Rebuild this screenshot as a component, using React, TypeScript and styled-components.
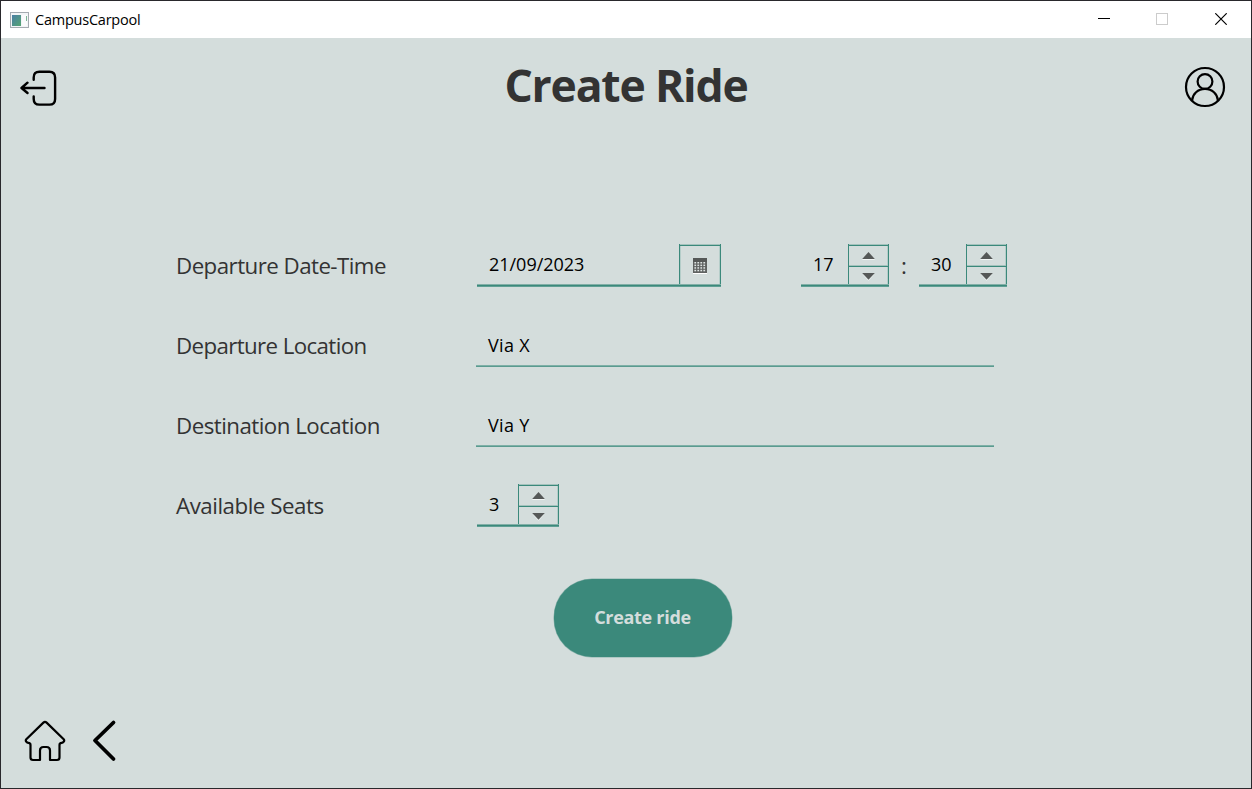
import React from 'react';
import styled, { createGlobalStyle } from 'styled-components';

const ACCENT = '#3b897b';
const SURFACE = '#d4dddc';
const ACCENT_SOFT = '#a3c2bc';

const GlobalStyle = createGlobalStyle`
  * { box-sizing: border-box; }
  body { margin: 0; background: #fff; font-family: "Open Sans", "Noto Sans", sans-serif; }
`;

const Window = styled.div`
  width: 1252px;
  height: 789px;
  border: 1px solid #29282c;
  background: ${SURFACE};
  display: flex;
  flex-direction: column;
  overflow: hidden;
`;

const TitleBar = styled.div`
  height: 37px;
  flex: none;
  background: #fff;
  display: flex;
  align-items: center;
  padding: 0 0 0 9px;
`;

const AppIcon = styled.svg`
  width: 19px;
  height: 16px;
  margin-right: 6px;
`;

const AppName = styled.span`
  flex: 1;
  font-size: 14.5px;
  line-height: 20px;
  color: #000;
  letter-spacing: -0.23px;
`;

const WindowButton = styled.button<{ $width?: number }>`
  width: ${p => p.$width ?? 58}px;
  height: 37px;
  padding: 0 0 1px;
  border: 0;
  background: none;
  display: flex;
  align-items: center;
  justify-content: center;
`;

const Header = styled.header`
  height: 188px;
  flex: none;
  display: grid;
  grid-template-columns: 67px 1fr 67px;
  align-items: start;
`;

const IconButton = styled.button<{ $x: number; $y: number }>`
  padding: ${p => p.$y}px 0 0 ${p => p.$x}px;
  border: 0;
  background: none;
  display: flex;
`;

const Title = styled.h1`
  margin: 17px 0 0;
  text-align: center;
  font-size: 44.5px;
  line-height: 60px;
  font-weight: 700;
  color: #333;
  letter-spacing: -1.2px;
`;

const Form = styled.form`
  padding-left: 175px;
  flex: none;
`;

const Row = styled.div`
  height: 80px;
  display: grid;
  grid-template-columns: 300px 1fr;
  align-items: center;
`;

const Label = styled.label<{ $spacing: number }>`
  font-size: 22.3px;
  line-height: 30px;
  color: #333;
  white-space: nowrap;
  letter-spacing: ${p => p.$spacing}px;
`;

const Controls = styled.div`
  display: flex;
  align-items: center;
`;

const Field = styled.div<{ $width: number }>`
  position: relative;
  width: ${p => p.$width}px;
  height: 43px;
  margin: 0 0 1px 1px;
  display: flex;
  &::after {
    content: '';
    position: absolute;
    left: 0;
    right: 0;
    bottom: 0;
    height: 3px;
    background: linear-gradient(#82afa7 0 1px, ${ACCENT} 1px 2px, #5f9f94 2px 3px);
  }
`;

const Value = styled.span<{ $spacing?: number }>`
  flex: 1;
  padding-left: 12px;
  font-size: 18px;
  line-height: 41px;
  color: #000;
  white-space: nowrap;
  letter-spacing: ${p => p.$spacing ?? 0}px;
`;

const CalendarButton = styled.button`
  width: 42px;
  padding: 0;
  background: none;
  border: 1px solid ${ACCENT};
  border-top: 0;
  box-shadow: inset 0 1px ${ACCENT_SOFT}, inset 0 2px ${ACCENT}, inset 1px 0 #b4cdc9, inset -1px 0 #b4cdc9;
  display: flex;
  align-items: center;
  justify-content: center;
`;

const Arrows = styled.div`
  width: 41px;
  display: flex;
  flex-direction: column;
`;

const ArrowButton = styled.button`
  height: 21px;
  padding: 0;
  background: none;
  border: 1px solid ${ACCENT};
  border-width: 0 1px;
  box-shadow: inset 0 1px ${ACCENT_SOFT}, inset 0 2px ${ACCENT}, inset -1px 0 #b4cdc9;
  display: flex;
  justify-content: center;
`;

const TextField = styled.div`
  width: 518px;
  height: 42px;
  border-bottom: 1px solid #5a9b90;
  box-shadow: inset 0 -1px #7fb0a7;
  display: flex;
`;

const Gap = styled.div`
  width: 79px;
`;

const Colon = styled.span`
  width: 30px;
  margin-right: -1px;
  text-align: center;
  font-size: 22.5px;
  line-height: 30px;
  color: #333;
`;

const SubmitButton = styled.button`
  width: 178px;
  height: 78px;
  margin: 32.5px 0 0 377.5px;
  padding: 0 0 1px;
  border: 0;
  border-radius: 38px;
  background: ${ACCENT};
  box-shadow: 0 0 0 0.5px #8ab3ac;
  color: ${SURFACE};
  font: 700 18px/24px "Open Sans", "Noto Sans", sans-serif;
  letter-spacing: -0.3px;
`;

const Footer = styled.footer`
  flex: 1;
  display: flex;
  align-items: flex-start;
  padding: 62.5px 0 0 22.5px;
  gap: 24px;
`;

function Spinner({ value, width, spacing }: { value: string; width: number; spacing?: number }) {
  return (
    <Field $width={width}>
      <Value $spacing={spacing}>{value}</Value>
      <Arrows>
        <ArrowButton type="button" aria-label="Increase">
          <svg width="13" height="21" viewBox="0 0 13 21">
            <path d="M.5 15.5h12" stroke="#f1f5f4" />
            <path d="M6.500 8l6.300 7H.2z" fill="#555857" />
          </svg>
        </ArrowButton>
        <ArrowButton type="button" aria-label="Decrease">
          <svg width="13" height="21" viewBox="0 0 13 21">
            <path d="M6.500 15.800L1 9.500h11z" fill="#f1f5f4" />
            <path d="M6.500 14.800L.2 8h12.600z" fill="#555857" />
          </svg>
        </ArrowButton>
      </Arrows>
    </Field>
  );
}

function CalendarIcon() {
  const cells: React.ReactNode[] = [];
  for (let r = 0; r < 4; r++) {
    for (let c = 0; c < 4; c++) {
      cells.push(<rect key={`${r}-${c}`} x={1.4 + c * 3} y={5 + r * 2.6} width="1.7" height="1.5" />);
    }
  }
  return (
    <svg width="14" height="17" viewBox="0 0 14 17">
      <rect y="2" width="14" height="15" fill="#fff" />
      <rect y="1" width="14" height="15" fill="#5f6261" />
      <rect y="1" width="14" height="4" fill="#555857" />
      <g fill="#e0e6e5">{cells}</g>
    </svg>
  );
}

export default function App() {
  return (
    <>
      <GlobalStyle />
      <Window>
        <TitleBar>
          <AppIcon viewBox="0 0 19 16">
            <defs>
              <linearGradient id="tile" x1="0" y1="0" x2="1" y2="1">
                <stop offset="0" stopColor="#4a7fa5" />
                <stop offset="1" stopColor="#55a572" />
              </linearGradient>
            </defs>
            <rect x=".5" y=".5" width="18" height="15" fill="#f3f5f7" stroke="#a5abb1" />
            <rect x="2" y="3" width="9" height="11" fill="url(#tile)" />
            <rect x="12" y="3" width="5" height="11" fill="#fafbfc" />
            <path d="M16.5 4v5" stroke="#7db595" />
          </AppIcon>
          <AppName>CampusCarpool</AppName>
          <WindowButton aria-label="Minimize">
            <svg width="12" height="12" shapeRendering="crispEdges"><path d="M0 5.5h12" stroke="#000" /></svg>
          </WindowButton>
          <WindowButton aria-label="Maximize">
            <svg width="12" height="12"><rect x=".5" y=".5" width="11" height="11" fill="none" stroke="#ccc" /></svg>
          </WindowButton>
          <WindowButton $width={60} aria-label="Close">
            <svg width="12" height="12"><path d="M.3.3l11.4 11.4M11.7.3L.3 11.7" stroke="#000" strokeWidth="1.2" /></svg>
          </WindowButton>
        </TitleBar>

        <Header>
          <IconButton $x={19} $y={31} aria-label="Log out">
            <svg width="38" height="38" viewBox="0 0 38 38" fill="none" stroke="#000" strokeWidth="2.4" strokeLinecap="round" strokeLinejoin="round">
              <path d="M13.700 10.800V8.400q0-5.700 5.700-5.700h10q5.700 0 5.700 5.700v21.500q0 5.700-5.700 5.700h-10q-5.700 0-5.700-5.700v-2.400" />
              <path d="M24.500 19H2M7.500 13.700L1.500 19l6 5" />
            </svg>
          </IconButton>
          <Title>Create Ride</Title>
          <IconButton $x={0} $y={28} aria-label="Profile">
            <svg width="42" height="42" viewBox="0 0 42 42" fill="none" stroke="#000" strokeWidth="2.2">
              <circle cx="21" cy="21" r="19" />
              <circle cx="21" cy="15.500" r="7.400" />
              <path d="M8.200 35v-1c.4-6 5.600-11.100 12.800-11.100s12.400 5.100 12.800 11.100v1" />
            </svg>
          </IconButton>
        </Header>

        <Form>
          <Row>
            <Label $spacing={-0.54}>Departure Date-Time</Label>
            <Controls>
              <Field $width={244}>
                <Value $spacing={-0.02}>21/09/2023</Value>
                <CalendarButton type="button" aria-label="Pick a date"><CalendarIcon /></CalendarButton>
              </Field>
              <Gap />
              <Spinner value="17" width={88} spacing={0} />
              <Colon>:</Colon>
              <Spinner value="30" width={88} spacing={0} />
            </Controls>
          </Row>
          <Row>
            <Label $spacing={-0.62}>Departure Location</Label>
            <TextField><Value $spacing={0.3}>Via X</Value></TextField>
          </Row>
          <Row>
            <Label $spacing={-0.52}>Destination Location</Label>
            <TextField><Value $spacing={0.3}>Via Y</Value></TextField>
          </Row>
          <Row>
            <Label $spacing={-0.46}>Available Seats</Label>
            <Spinner value="3" width={82} />
          </Row>
          <SubmitButton type="button">Create ride</SubmitButton>
        </Form>

        <Footer>
          <IconButton $x={0} $y={0} aria-label="Home">
            <svg width="42" height="43" viewBox="0 0 42 43" fill="none" stroke="#000" strokeWidth="2.2" strokeLinejoin="round">
              <path d="M19.400 3.600L2.300 20.300q-1 1.200 0 2.400 .8 1.100 2 1.200 2.200 .2 2.200 2V38.500q0 2.500 2.500 2.500h7V31.500q0-3.500 3.500-3.500h3q3.500 0 3.500 3.500v9.500h7q2.500 0 2.500-2.500V25.900q0-1.800 2.200-2 1.200-.1 2-1.200 1-1.200 0-2.400L22.600 3.600q-1.600-1.500-3.200 0z" />
            </svg>
          </IconButton>
          <IconButton $x={0} $y={0} aria-label="Back">
            <svg width="28" height="43" viewBox="0 0 28 43" fill="none" stroke="#000" strokeWidth="3.800" strokeLinecap="round" strokeLinejoin="round">
              <path d="M23.500 3.500L5 21.500l18.500 18.500" />
            </svg>
          </IconButton>
        </Footer>
      </Window>
    </>
  );
}
